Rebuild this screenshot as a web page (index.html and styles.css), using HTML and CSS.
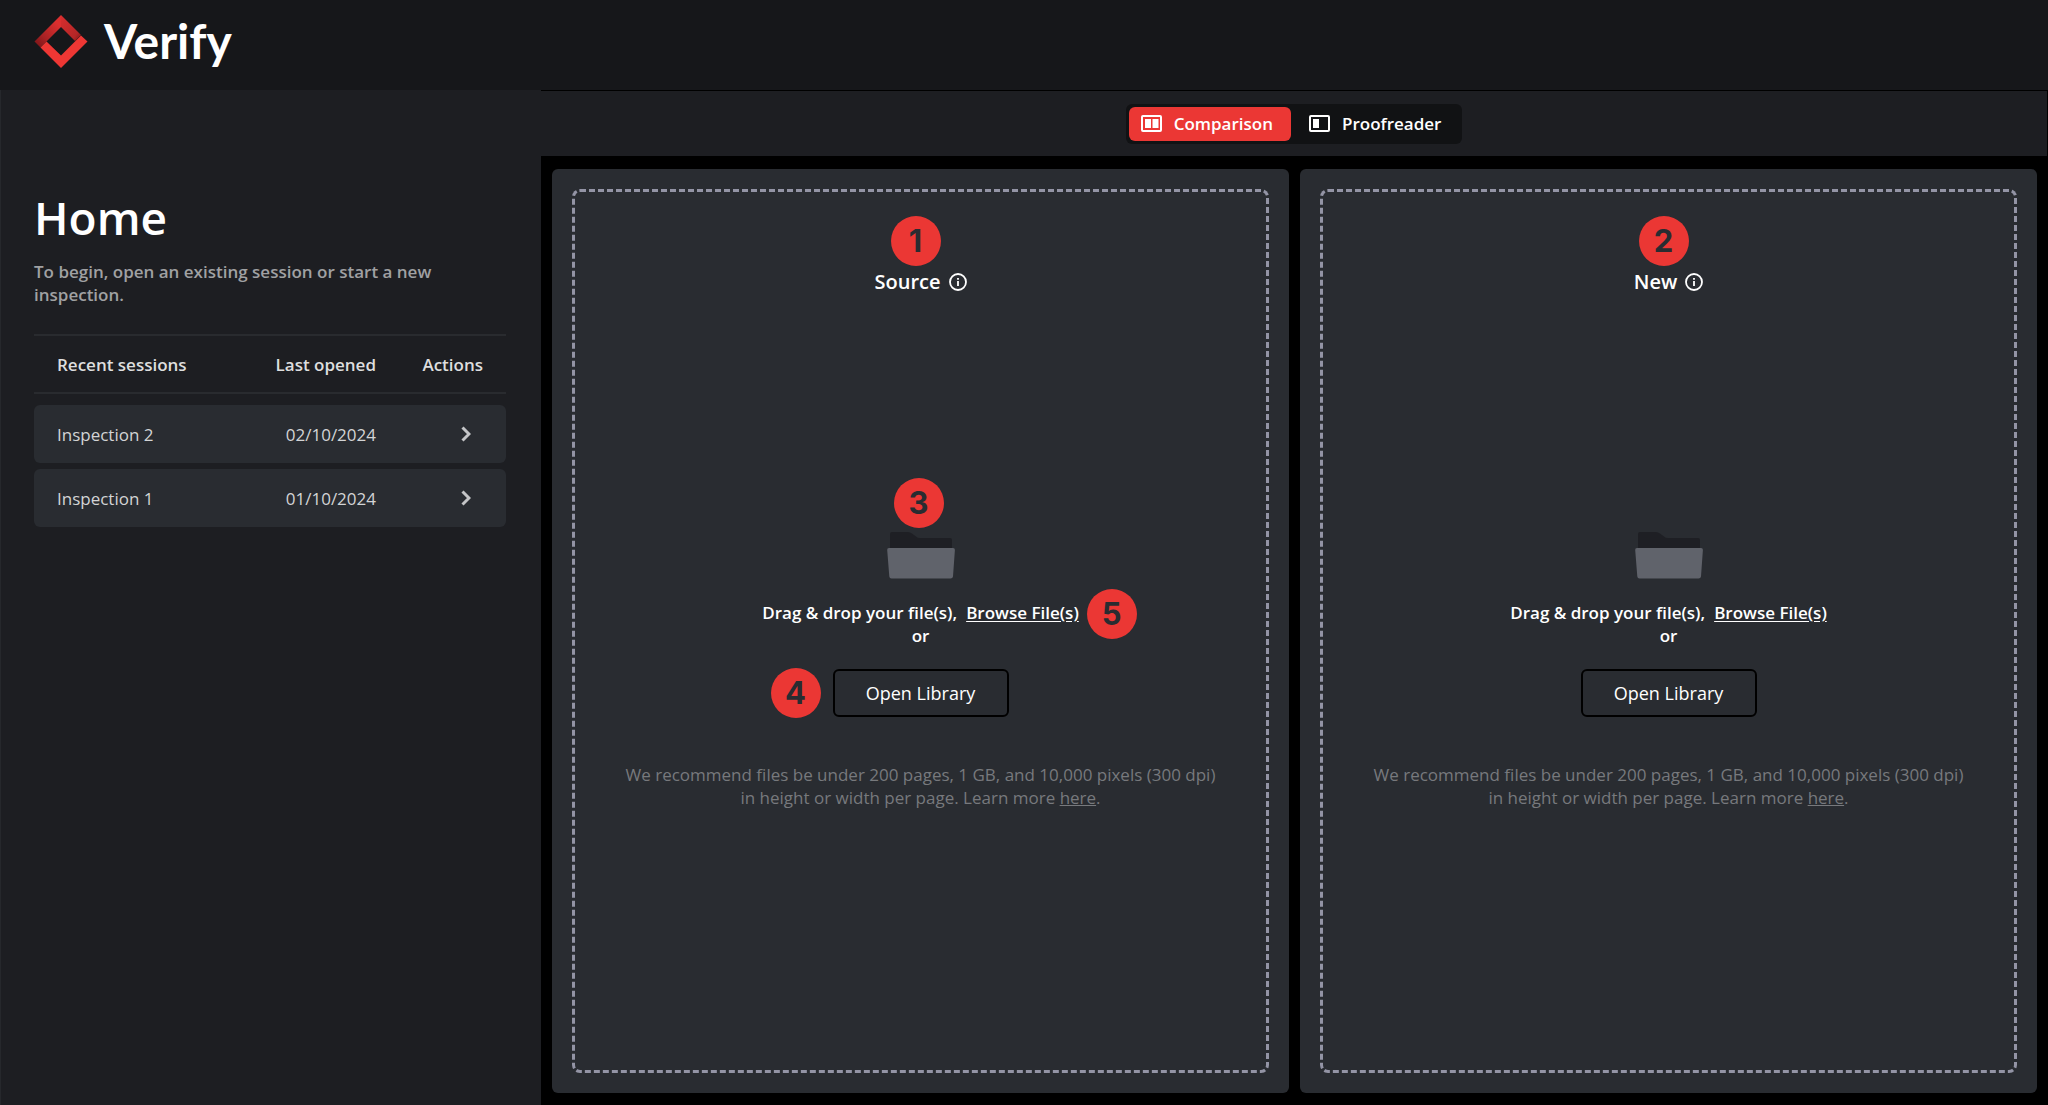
FILE: index.html
```html
<!DOCTYPE html>
<html lang="en">
<head>
<meta charset="utf-8">
<meta name="viewport" content="width=device-width, initial-scale=1">
<title>Verify</title>
<link rel="stylesheet" href="styles.css">
</head>
<body>
<header class="topbar">
  <svg class="logo" viewBox="0 0 54 54" aria-hidden="true">
    <defs>
      <linearGradient id="logo-top" x1="0.8" y1="0.2" x2="0.1" y2="1">
        <stop offset="0" stop-color="#dc2f2f"/>
        <stop offset="0.6" stop-color="#a92224"/>
        <stop offset="1" stop-color="#7c1518"/>
      </linearGradient>
      <linearGradient id="logo-side" x1="0" y1="0" x2="1" y2="1">
        <stop offset="0" stop-color="#d92e2e"/>
        <stop offset="0.75" stop-color="#b52627"/>
        <stop offset="1" stop-color="#7c1518"/>
      </linearGradient>
    </defs>
    <path d="M27 1 0.500 27.500 6.500 33.500 27 13Z" fill="url(#logo-top)"/>
    <path d="M27 1 47 21 41 27 27 13Z" fill="url(#logo-side)"/>
    <path d="M6.500 33.500 12.500 27.500 27 41.500 47 21.500 53.500 27.500 27 54Z" fill="#ee3734"/>
  </svg>
  <span class="brand">Verify</span>
</header>
<div class="layout">
  <aside class="sidebar">
    <h1 class="heading">Home</h1>
    <p class="intro">To begin, open an existing session or start a new inspection.</p>
    <table class="sessions">
      <thead>
        <tr><th scope="col">Recent sessions</th><th scope="col" class="date">Last opened</th><th scope="col" class="action">Actions</th></tr>
      </thead>
      <tbody>
        <tr><td>Inspection 2</td><td class="date">02/10/2024</td><td class="action"><button class="open" type="button" aria-label="Open Inspection 2"><svg class="chevron" viewBox="0 0 10 16" aria-hidden="true"><path d="M1.500 1.500 8 8 1.500 14.500"/></svg></button></td></tr>
        <tr><td>Inspection 1</td><td class="date">01/10/2024</td><td class="action"><button class="open" type="button" aria-label="Open Inspection 1"><svg class="chevron" viewBox="0 0 10 16" aria-hidden="true"><path d="M1.500 1.500 8 8 1.500 14.500"/></svg></button></td></tr>
      </tbody>
    </table>
  </aside>
  <main class="workspace">
    <nav class="modes">
      <div class="switch">
        <button class="mode mode-active" type="button"><svg class="mode-icon" viewBox="0 0 21 17" aria-hidden="true"><rect x="1" y="1" width="19" height="15" rx="1" fill="none" stroke="currentColor" stroke-width="2"/><path d="M4 4h6v9H4zM11.500 4h6v9h-6z" fill="currentColor"/></svg>Comparison</button>
        <button class="mode" type="button"><svg class="mode-icon" viewBox="0 0 21 17" aria-hidden="true"><rect x="1" y="1" width="19" height="15" rx="1" fill="none" stroke="currentColor" stroke-width="2"/><path d="M4 4h6v9H4z" fill="currentColor"/></svg>Proofreader</button>
      </div>
    </nav>
    <div class="panels">
      <section class="panel">
        <div class="dropzone">
          <h2 class="title">Source <svg class="info" viewBox="0 0 18 18" aria-hidden="true"><circle cx="9" cy="9" r="8" fill="none" stroke="currentColor" stroke-width="1.800"/><path d="M8.100 8h1.800v5H8.100zM8.100 5h1.800v1.800H8.100z" fill="currentColor"/></svg><span class="badge badge-title">1</span></h2>
          <div class="folder-wrap">
            <svg class="folder" viewBox="0 0 68 48" aria-hidden="true"><path d="M3 20V3q0-2 2-2h16q2 0 4 1.500l4 3q1.500 1.500 4 1.500h30q2 0 2 2v11z" fill="#1e1f24"/><path d="M2 17h64q2 0 1.900 2L66 45.500q-.3 2-2.500 2h-59q-2 0-2.200-2L.2 19Q0 17 2 17z" fill="#60636b"/></svg>
            <span class="badge badge-folder">3</span>
          </div>
          <div class="prompt">
            <span>Drag &amp; drop your file(s),</span>
            <a class="browse" href="#">Browse File(s)<span class="badge badge-browse">5</span></a>
            <span class="or">or</span>
          </div>
          <div class="library-wrap"><button class="library" type="button">Open Library</button><span class="badge badge-library">4</span></div>
          <p class="note">We recommend files be under 200 pages, 1 GB, and 10,000 pixels (300 dpi) in height or width per page. Learn more <a href="#">here</a>.</p>
        </div>
      </section>
      <section class="panel">
        <div class="dropzone">
          <h2 class="title">New <svg class="info" viewBox="0 0 18 18" aria-hidden="true"><circle cx="9" cy="9" r="8" fill="none" stroke="currentColor" stroke-width="1.800"/><path d="M8.100 8h1.800v5H8.100zM8.100 5h1.800v1.800H8.100z" fill="currentColor"/></svg><span class="badge badge-title">2</span></h2>
          <div class="folder-wrap">
            <svg class="folder" viewBox="0 0 68 48" aria-hidden="true"><path d="M3 20V3q0-2 2-2h16q2 0 4 1.500l4 3q1.500 1.500 4 1.500h30q2 0 2 2v11z" fill="#1e1f24"/><path d="M2 17h64q2 0 1.900 2L66 45.500q-.3 2-2.500 2h-59q-2 0-2.200-2L.2 19Q0 17 2 17z" fill="#60636b"/></svg>
          </div>
          <div class="prompt">
            <span>Drag &amp; drop your file(s),</span>
            <a class="browse" href="#">Browse File(s)</a>
            <span class="or">or</span>
          </div>
          <div class="library-wrap"><button class="library" type="button">Open Library</button></div>
          <p class="note">We recommend files be under 200 pages, 1 GB, and 10,000 pixels (300 dpi) in height or width per page. Learn more <a href="#">here</a>.</p>
        </div>
      </section>
    </div>
  </main>
</div>
</body>
</html>
```
FILE: styles.css
```css
* { box-sizing: border-box; }

body {
  margin: 0;
  min-height: 100vh;
  display: flex;
  flex-direction: column;
  background: #000;
  color: #fff;
  font: 600 17px/23px "Open Sans", "Noto Sans", sans-serif;
}

button { font: inherit; color: inherit; cursor: pointer; }
a { color: inherit; }

.topbar {
  display: flex;
  align-items: center;
  gap: 16px;
  height: 90px;
  padding: 0 34px 8px;
  background: #16171a;
}
.logo { width: 54px; height: 54px; }
.brand { font: 700 48px/54px Lato, sans-serif; }

.layout { flex: 1; display: flex; }

.sidebar {
  flex: none;
  width: 541px;
  padding: 99px 35px 32px 33px;
  border-left: 1px solid #26282c;
  background: #1d1e22;
}
.heading { margin: 0; font-size: 46px; line-height: 56px; font-weight: 600; }
.intro { margin: 15px 0 28px; color: #a0a1a3; }

.sessions, .sessions thead { display: block; }
.sessions tr {
  display: grid;
  grid-template-columns: 1fr 140px 107px;
  align-items: center;
  height: 58px;
  padding: 0 23px;
}
.sessions thead tr {
  height: 60px;
  border: solid #292b2f;
  border-width: 2px 0;
  color: #dededf;
}
.sessions tbody {
  display: flex;
  flex-direction: column;
  gap: 6px;
  margin-top: 11px;
}
.sessions tbody tr { border-radius: 6px; background: #292c31; color: #d3d4d5; }
.sessions th, .sessions td { padding: 0; text-align: left; font-weight: 600; }
.sessions td { font-weight: 400; }
.sessions .date, .sessions .action { text-align: right; }
.open { display: inline-flex; padding: 4px 12px; border: 0; background: none; }
.chevron {
  width: 10px;
  height: 16px;
  fill: none;
  stroke: #c4c5c7;
  stroke-width: 3;
}

.workspace { flex: 1; min-width: 0; display: flex; flex-direction: column; }
.modes {
  display: flex;
  justify-content: center;
  margin: 1px 1px 0 0;
  padding: 13px 0 12px;
  background: #1d1e22;
}
.switch {
  display: flex;
  padding: 3px;
  border-radius: 6px;
  background: #111214;
}
.mode {
  display: flex;
  align-items: center;
  gap: 12px;
  height: 34px;
  padding: 0 18px 1px;
  border: 0;
  border-radius: 6px;
  background: none;
}
.mode-active { padding-left: 12px; background: #eb3734; }
.mode-icon { width: 21px; height: 17px; }

.panels {
  flex: 1;
  display: grid;
  grid-template-columns: 1fr 1fr;
  gap: 11px;
  padding: 13px 11px 12px;
}
.panel { display: flex; padding: 20px; border-radius: 6px; background: #292c31; }
.dropzone {
  flex: 1;
  padding: 77px 32px 32px;
  border: 3px dashed #9394a5;
  border-radius: 8px;
  text-align: center;
}
.title {
  position: relative;
  display: flex;
  justify-content: center;
  align-items: center;
  gap: 8px;
  margin: 0 auto;
  width: 120px;
  font-size: 20px;
  line-height: 26px;
  font-weight: 600;
}
.info { width: 18px; height: 18px; }

.folder-wrap, .library-wrap { position: relative; width: max-content; margin: 0 auto; }
.folder-wrap { margin-top: 236px; }
.folder { display: block; width: 68px; height: 48px; }
.prompt {
  display: flex;
  flex-wrap: wrap;
  justify-content: center;
  column-gap: 9px;
  margin: 22px 0;
}
.or { flex-basis: 100%; }
.browse { position: relative; text-underline-offset: 2px; }
.library {
  display: block;
  width: 176px;
  height: 48px;
  border: 2px solid #000;
  border-radius: 6px;
  background: none;
  font-size: 18px;
  font-weight: 400;
}
.note {
  max-width: 600px;
  margin: 46px auto 0;
  color: #77797d;
  font-weight: 400;
}

/* Numbered callouts laid over the controls they refer to */
.badge {
  position: absolute;
  display: inline-block;
  width: 50px;
  height: 50px;
  border-radius: 50%;
  background: #eb3734;
  color: #292c31;
  text-align: center;
  font: 700 31px/50px Inter, sans-serif;
}
.badge-title { left: 30px; bottom: 29px; }
.badge-folder { left: 7px; bottom: 51px; }
.badge-browse { left: calc(100% + 8px); top: -12px; }
.badge-library { right: calc(100% + 12px); top: -1px; }
```
